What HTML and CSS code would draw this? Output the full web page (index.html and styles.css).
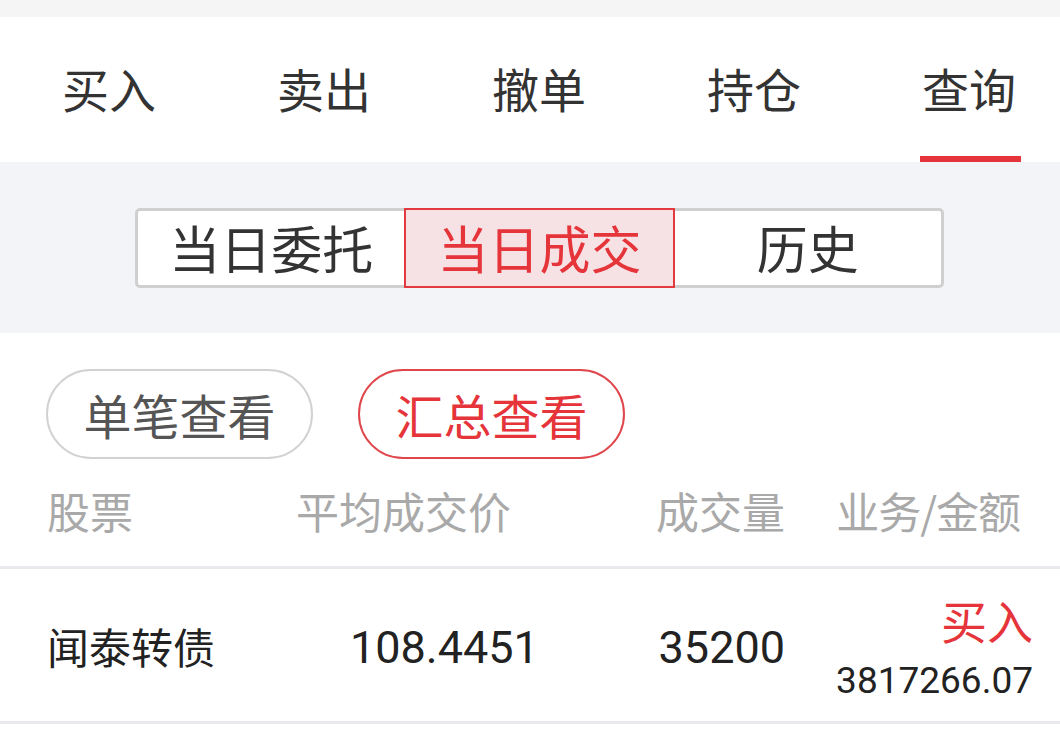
FILE: index.html
```html
<!DOCTYPE html>
<html lang="zh-CN">
<head>
<meta charset="UTF-8">
<meta name="viewport" content="width=device-width, initial-scale=1.0">
<title>查询</title>
<link rel="stylesheet" href="styles.css">
</head>
<body>

<!-- 顶部留白 -->
<div class="top-strip"></div>

<!-- 交易菜单 -->
<div class="tabs">
  <div class="tab">买入</div>
  <div class="tab">卖出</div>
  <div class="tab">撤单</div>
  <div class="tab">持仓</div>
  <div class="tab active">查询</div>
</div>

<!-- 查询类型 -->
<div class="sub-area">
  <div class="segment">
    <div class="seg-item">当日委托</div>
    <div class="seg-item active">当日成交</div>
    <div class="seg-item">历史</div>
  </div>
</div>

<div class="content">
  <div class="filters">
    <div class="pill">单笔查看</div>
    <div class="pill active">汇总查看</div>
  </div>

  <div class="table-head">
    <div class="col-name">股票</div>
    <div class="col-price">平均成交价</div>
    <div class="col-vol">成交量</div>
    <div class="col-amt">业务/金额</div>
  </div>

  <div class="table-row">
    <div class="col-name">闻泰转债</div>
    <div class="col-price num">108.4451</div>
    <div class="col-vol num">35200</div>
    <div class="col-amt">
      <div class="side buy">买入</div>
      <div class="amount num">3817266.07</div>
    </div>
  </div>
</div>

</body>
</html>
```

FILE: styles.css
```css
body {
  margin: 0;
  width: 1060px;
  height: 729px;
  overflow: hidden;
  background-color: #fff;
  font-family: 'Noto Sans CJK SC', sans-serif;
  color: #333;
}
.top-strip {
  height: 17px;
  background-color: #f5f5f5;
}

/* 交易菜单 */
.tabs {
  display: flex;
  justify-content: space-between;
  height: 145px;
  padding: 0 44px 0 62px;
  background-color: #fff;
}
.tab {
  position: relative;
  display: flex;
  align-items: center;
  padding-bottom: 4px;
  font-size: 47px;
  line-height: 1;
  color: #333;
}
.tab.active::after {
  content: "";
  position: absolute;
  left: -2px;
  right: -5px;
  bottom: 0;
  height: 6px;
  background-color: #e5343a;
}

/* 查询类型 */
.sub-area {
  display: flex;
  align-items: center;
  height: 171px;
  padding-left: 135px;
  background-color: #f3f4f8;
}
.segment {
  display: flex;
  width: 803px;
  height: 74px;
  border: 3px solid #cfcfcf;
  border-radius: 5px;
  background-color: #fff;
}
.seg-item {
  flex: 1;
  display: flex;
  justify-content: center;
  align-items: center;
  font-size: 51px;
  line-height: 1;
  color: #333;
}
.seg-item.active {
  margin: -3px 0;
  border: 2px solid #e23a3f;
  background-color: #f6e1e5;
  color: #e5343a;
}

/* 汇总方式 */
.filters {
  display: flex;
  gap: 45px;
  padding: 36px 0 0 46px;
}
.pill {
  display: flex;
  justify-content: center;
  align-items: center;
  width: 263px;
  height: 86px;
  border: 2px solid #d2d2d2;
  border-radius: 45px;
  font-size: 48px;
  line-height: 1;
  color: #555;
}
.pill.active {
  border-color: #e0474c;
  color: #e5343a;
}

/* 成交表格 */
.table-head,
.table-row {
  display: grid;
  grid-template-columns: 249px 244px 245px 1fr;
  align-items: center;
  padding-left: 47px;
  border-bottom: 3px solid #e9e9ee;
}
.table-head {
  height: 103px;
  padding-bottom: 4px;
  font-size: 43px;
  line-height: 1;
  color: #a9a9a9;
}
.table-head .col-vol {
  text-align: right;
}
.table-head .col-amt {
  text-align: right;
  padding-right: 40px;
  letter-spacing: -1px;
}
.table-row {
  height: 152px;
  color: #222;
}
.table-row .col-name {
  font-size: 42px;
  line-height: 1;
  padding-top: 2px;
}
.num {
  font-family: 'Roboto', 'Liberation Sans', sans-serif;
}
.table-row .col-price {
  padding-left: 54px;
  padding-top: 4px;
  font-size: 45px;
  line-height: 1;
}
.table-row .col-vol {
  text-align: right;
  padding-top: 4px;
  font-size: 45px;
  line-height: 1;
}
.table-row .col-amt {
  text-align: right;
  padding-right: 27px;
  padding-top: 2px;
}
.side {
  font-size: 46px;
  line-height: 56px;
}
.buy {
  color: #e5343a;
}
.amount {
  margin-top: 14px;
  font-size: 37px;
  line-height: 40px;
  color: #222;
}
```
